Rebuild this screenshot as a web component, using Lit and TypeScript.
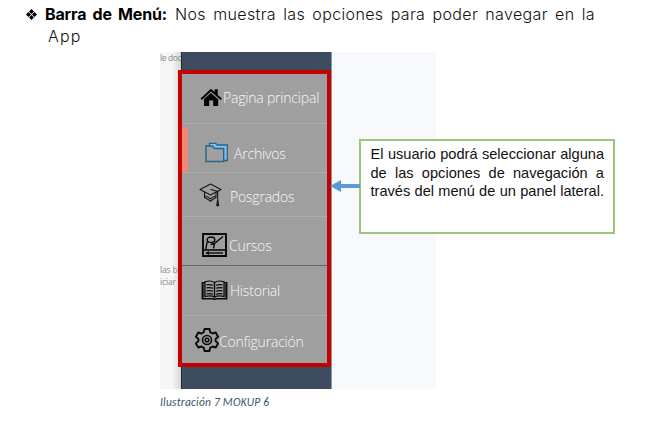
import { LitElement, html, css, svg } from "lit";
import { customElement } from "lit/decorators.js";

const icons = {
  home: svg`<path d="M0.5 11.500 11 1.800l3.600 3.200V2.300h3.200v5.600l4.200 3.700-1.300 1.400L11 4.500 1.800 13z M4 12 11 5.900l7.200 6.300V19h-5v-5.400H9.200V19H4z" fill="#050505"/>`,
  files: svg`<path d="M4.500 4V1.300h6l1.800 1.700h10v15.500h-3.500" fill="#7fc4ea" stroke="#27648c" stroke-width="1.300"/><path d="M1 19.500V4h6.500l2 2.500h9.200v13z" fill="#a0a0a0" stroke="#27648c" stroke-width="1.400"/>`,
  cap: svg`<g fill="none" stroke="#161616" stroke-width="1.100" stroke-linejoin="round"><path d="M1 6.500 11.500 1 22 6.500 11.500 12z"/><path d="M5.500 9v5.500c2.500 1 4.500 2.200 6 3.800 1.500-1.600 3-2.600 5.500-3.800V9"/><path d="M6 13c2.500.5 4.300 1.500 5.500 3 1.200-1.500 2.800-2.500 5.300-3"/><path d="M11.500 6.300 18.700 8.500V16"/><path d="M18.700 16l-1 7M18.700 16v7.500M18.700 16l1 7"/></g>`,
  course: svg`<g fill="none" stroke="#080808" stroke-width="1.900"><path d="M1 1h23v22H1z"/><path d="M1 17h23" stroke-width="1.600"/><ellipse cx="9" cy="6.700" rx="3.800" ry="2.700" stroke-width="1.400"/><path d="M3.800 16.500 5.200 8.500M21 3.500 12.500 10.500 11.500 15.500M12.500 10.500 8.500 11.500" stroke-width="1.400"/><path d="M4 20h17" stroke-width="1.400"/><path d="m7 18-3.500 2L7 22z" fill="#080808" stroke="none"/></g>`,
  book: svg`<g fill="none" stroke="#080808"><path d="M4 1.800C7 .8 11 .8 13.500 2.500 16 .8 20 .8 23 1.800v14.700c-3.500-.8-7-.8-9.500.6C11 15.700 7.500 15.700 4 16.500z" stroke-width="1.200"/><path d="M4 2.800H1.300v16H12c1 .6 2 .6 3 0h10.700v-16H23" stroke-width="1.400"/><path d="M2.800 4v13.500M24.200 4v13.500" stroke-width="1"/><path d="M13.500 2.800v15" stroke-width="1.400"/><path d="M5.500 4.800c2.500-.4 4.500-.3 6.500.5M5.500 7.800c2.500-.4 4.500-.3 6.500.5M5.500 10.800c2.500-.4 4.500-.3 6.500.5M5.500 13.800c2.500-.4 4.500-.3 6.500.5M15 5.300c2-.8 4-.9 6.500-.5M15 8.300c2-.8 4-.9 6.500-.5M15 11.300c2-.8 4-.9 6.500-.5M15 14.300c2-.8 4-.9 6.500-.5" stroke-width="1.200"/></g>`,
  gear: svg`<g fill="none" stroke="#0b0b0b"><path d="M9.500 1h5l.7 3.200 2.300 1.300 3.200-1 2.400 4.200-2.500 2.200v2.200l2.500 2.300-2.400 4.100-3.200-1-2.300 1.300-.7 3.200h-5l-.7-3.200-2.300-1.300-3.200 1-2.400-4.100 2.500-2.300v-2.200L.9 8.700l2.400-4.200 3.200 1 2.300-1.300z" stroke-width="1.900" stroke-linejoin="round"/><circle cx="12" cy="12" r="4.500" stroke-width="1.600"/><circle cx="12" cy="12" r="1.800" stroke-width="1.500"/></g>`,
};

const rows = [
  { id: "home", label: "Pagina principal", icon: icons.home, w: 23, h: 20 },
  { id: "files", label: "Archivos", icon: icons.files, w: 23, h: 21 },
  { id: "cap", label: "Posgrados", icon: icons.cap, w: 23, h: 24 },
  { id: "course", label: "Cursos", icon: icons.course, w: 25, h: 24 },
  { id: "book", label: "Historial", icon: icons.book, w: 27, h: 20 },
  { id: "gear", label: "Configuración", icon: icons.gear, w: 24, h: 24 },
];

@customElement("side-menu")
export class SideMenu extends LitElement {
  static styles = css`
    :host { display: block; box-sizing: border-box; border: 4px solid #c40000; background: #9f9f9f; }
    .row { display: flex; align-items: flex-start; box-sizing: border-box; border-bottom: 1px solid #adadae; color: #f8f8f8;
      font: 300 14px/20px "Open Sans", "Noto Sans", sans-serif; letter-spacing: -0.2px; white-space: nowrap; }
    svg { display: block; flex: none; }
    .home { height: 50px; padding: 13px 0 0 18px; }
    .home .label { margin-top: 1px; }
    .files { height: 49px; padding: 18px 0 0 23px; background: linear-gradient(#f08878, #f08878) 0 3px / 6px 46px no-repeat; }
    .files .label { margin: 2px 0 0 6px; }
    .cap { height: 44px; padding: 10px 0 0 17px; }
    .cap .label { margin: 4px 0 0 8px; }
    .course { height: 49px; padding: 16px 0 0 20px; border-bottom-color: #53687e; }
    .course .label { margin: 3px 0 0 2px; }
    .book { height: 50px; padding: 14px 0 0 19px; }
    .book .label { margin: 1px 0 0 2px; }
    .gear { height: 47px; padding: 12px 0 0 13px; border-bottom: 0; }
    .gear .label { margin: 4px 0 0 0; }
  `;
  render() {
    return rows.map(r => html`<div class="row ${r.id}">
      <svg width=${r.w} height=${r.h} viewBox="0 0 ${r.w} ${r.h}">${r.icon}</svg><span class="label">${r.label}</span></div>`);
  }
}

@customElement("app-root")
export class AppRoot extends LitElement {
  static styles = css`
    :host { display: block; position: relative; width: 651px; height: 421px; overflow: hidden; background: #fff; color: #111; }
    .intro { height: 52px; box-sizing: border-box; padding: 3px 0 0 25px; font: 300 16px/22px Inter, sans-serif; white-space: nowrap; }
    .line { display: flex; height: 22px; }
    .bullet { width: 11px; height: 11px; margin: 6px 8px 0 1px; flex: none; }
    .term { width: 122px; margin-right: 8px; font-weight: 700; font-size: 16px; text-align-last: justify; letter-spacing: -0.15px; color: #000; }
    .rest { width: 420px; text-align-last: justify; letter-spacing: 0.35px; }
    .second { padding-left: 23px; letter-spacing: 1.2px; }
    .figure { position: relative; display: grid; grid-template-columns: 21px 151px 104px; width: 276px; height: 337px; margin-left: 160px; }
    .page { background: linear-gradient(90deg, #f6f6f6 60%, #d5d5d5); color: #888; font: 8.500px/12px "Open Sans", sans-serif; letter-spacing: -0.4px; white-space: nowrap; }
    .top { height: 12px; }
    .body { margin-top: 200px; letter-spacing: -0.15px; }
    .nav { box-sizing: border-box; background: #3d4c5e; border-left: 1px solid #202a35; border-right: 1px solid #8997a4; }
    .blank { background: #f7f9fc; }
    side-menu { position: absolute; left: 18px; top: 18px; width: 153px; height: 297px; }
    .caption { margin: 5px 0 0 160px; font: italic 11.500px/16px Carlito, "Open Sans", sans-serif; color: #44546a; letter-spacing: 0.22px; white-space: nowrap; }
    .note { position: absolute; left: 359px; top: 139px; width: 256px; height: 95px; box-sizing: border-box; border: 2px solid #9bc47d; background: #fff;
      padding: 4px 9px 0 9.500px; font: 14.600px/18.500px "Liberation Sans", Arial, sans-serif; color: #111; }
    .note div { text-align-last: justify; white-space: nowrap; }
    .arrow { position: absolute; left: 330px; top: 179px; }
  `;
  render() {
    return html`
      <div class="intro">
        <div class="line">
          <svg class="bullet" viewBox="0 0 11 11"><path d="M5.500 0 8 2.500 5.500 5 3 2.500zM5.500 6 8 8.500 5.500 11 3 8.500zM2.500 3 5 5.500 2.500 8 0 5.500zM8.500 3 11 5.500 8.500 8 6 5.500z"/></svg>
          <span class="term">Barra de Menú:</span><span class="rest">Nos muestra las opciones para poder navegar en la</span>
        </div>
        <div class="line second">App</div>
      </div>
      <div class="figure">
        <div class="page"><div class="top">le doc</div><div class="body">las b<br>iciar</div></div>
        <div class="nav"></div><div class="blank"></div>
        <side-menu></side-menu>
      </div>
      <div class="caption">Ilustración 7 MOKUP 6</div>
      <div class="note"><div>El usuario podrá seleccionar alguna</div><div>de las opciones de navegación a</div><div>través del menú de un panel lateral.</div></div>
      <svg class="arrow" width="30" height="14" viewBox="0 0 30 14"><path d="M0 7 11 1v4h19v4H11v4z" fill="#5b9bd5"/></svg>`;
  }
}
